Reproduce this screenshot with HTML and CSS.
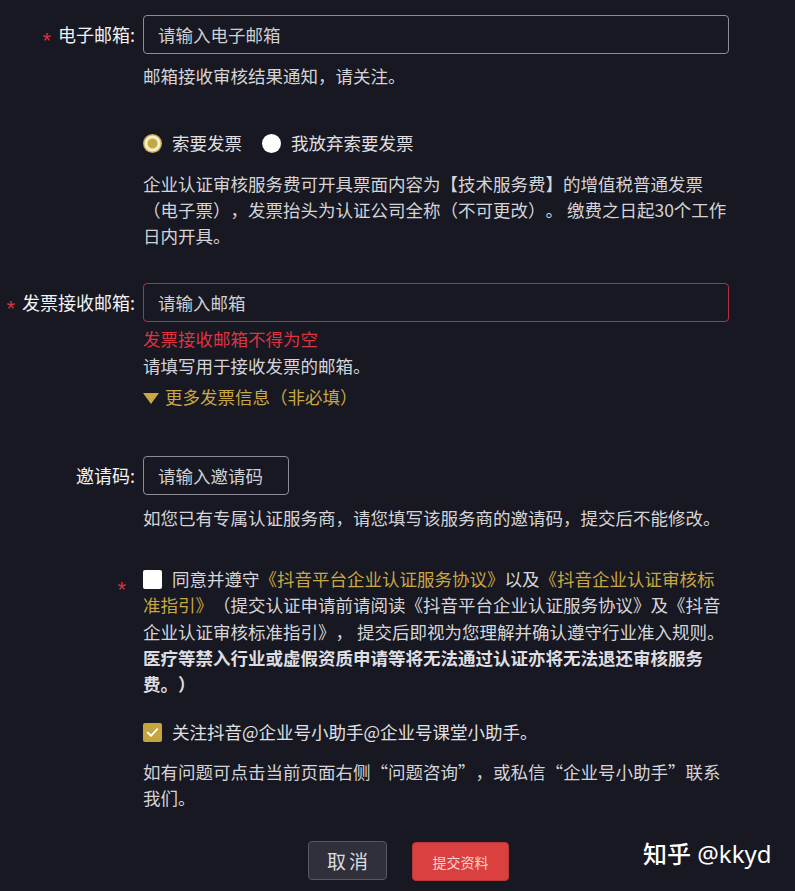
FILE: index.html
```html
<!DOCTYPE html>
<html lang="zh-CN">
<head>
<meta charset="utf-8">
<link rel="stylesheet" href="styles.css">
</head>
<body>
<div class="page">
  <form class="form">
    <div class="row row-email">
      <div class="label"><span class="star">*</span>电子邮箱:</div>
      <div class="field">
        <div class="input input-wide"><span class="ph">请输入电子邮箱</span></div>
        <div class="help help-email">邮箱接收审核结果通知，请关注。</div>
      </div>
    </div>

    <div class="row row-invoice">
      <div class="label"></div>
      <div class="field">
        <div class="radios">
          <label class="radio"><span class="dot dot-on"></span>索要发票</label>
          <label class="radio"><span class="dot"></span>我放弃索要发票</label>
        </div>
        <div class="help help-invoice">企业认证审核服务费可开具票面内容为【技术服务费】的增值税普通发票<br>（电子票），发票抬头为认证公司全称（不可更改）。 缴费之日起30个工作<br>日内开具。</div>
      </div>
    </div>

    <div class="row row-invmail">
      <div class="label"><span class="star">*</span>发票接收邮箱:</div>
      <div class="field">
        <div class="input input-wide input-error"><span class="ph">请输入邮箱</span></div>
        <div class="error">发票接收邮箱不得为空</div>
        <div class="help help-tight">请填写用于接收发票的邮箱。</div>
        <div class="more"><span class="tri"></span>更多发票信息（非必填）</div>
      </div>
    </div>

    <div class="row row-code">
      <div class="label">邀请码:</div>
      <div class="field">
        <div class="input input-short"><span class="ph">请输入邀请码</span></div>
        <div class="help help-code">如您已有专属认证服务商，请您填写该服务商的邀请码，提交后不能修改。</div>
      </div>
    </div>

    <div class="row row-agree">
      <div class="label"><span class="star star-agree">*</span></div>
      <div class="field">
        <p class="agree"><span class="box"></span>同意并遵守<a class="link">《抖音平台企业认证服务协议》</a>以及<a class="link">《抖音企业认证审核标<br>准指引》</a>（提交认证申请前请阅读《抖音平台企业认证服务协议》及《抖音<br>企业认证审核标准指引》， 提交后即视为您理解并确认遵守行业准入规则。<br><b>医疗等禁入行业或虚假资质申请等将无法通过认证亦将无法退还审核服务<br>费。）</b></p>
        <p class="follow"><span class="box box-on"><svg viewBox="0 0 20 20" width="19" height="19"><path d="M5 10.2l3.4 3.3 6.6-7" fill="none" stroke="#fff" stroke-width="2" stroke-linecap="round" stroke-linejoin="round"/></svg></span>关注抖音@企业号小助手@企业号课堂小助手。</p>
        <div class="help help-contact">如有问题可点击当前页面右侧“问题咨询”，或私信“企业号小助手”联系<br>我们。</div>
        <div class="actions">
          <button type="button" class="btn btn-cancel">取消</button>
          <button type="button" class="btn btn-submit">提交资料</button>
        </div>
      </div>
    </div>
  </form>
  <div class="watermark"><span class="wm-zh">知乎</span> @kkyd</div>
</div>
</body>
</html>
```

FILE: styles.css
```css
* { box-sizing: border-box; }
html, body {
  margin: 0;
  padding: 0;
  background: #171821;
}
body {
  font-family: "Noto Sans CJK SC", "Microsoft YaHei", "Noto Sans", sans-serif;
  color: #d6d6da;
  font-size: 17.5px;
  text-spacing-trim: space-all;
}
.page {
  position: relative;
  width: 795px;
  height: 891px;
  overflow: hidden;
}
.form {
  padding-top: 15px;
  display: flex;
  flex-direction: column;
}
.row {
  display: grid;
  grid-template-columns: 135px 640px;
  column-gap: 8px;
}
.label {
  text-align: right;
  color: #f2f2f4;
  font-size: 18px;
  line-height: 39px;
  height: 39px;
  white-space: nowrap;
}
.star {
  display: inline-block;
  color: #d3343f;
  font-family: "Liberation Sans", sans-serif;
  font-size: 22px;
  line-height: 20px;
  margin-right: 7px;
  position: relative;
  top: 6px;
}
.field {
  display: flex;
  flex-direction: column;
  align-items: flex-start;
}
.input {
  height: 39px;
  border: 1px solid #8d8d97;
  border-radius: 4px;
  padding-left: 14px;
  line-height: 37px;
  color: #cfcfd4;
  font-size: 17.5px;
}
.input-wide { width: 586px; }
.input-short { width: 146px; }
.input-error { border-color: #b8303f; height: 39px; }
.help {
  line-height: 26px;
  color: #d4d4d8;
  white-space: nowrap;
}
.help-email { margin-top: 9px; }
.row-invoice { margin-top: 41px; }
.radios {
  display: flex;
  gap: 20px;
  line-height: 26px;
}
.radio {
  display: flex;
  align-items: center;
  gap: 10px;
  color: #e0e0e4;
}
.dot {
  width: 19px;
  height: 19px;
  border-radius: 50%;
  background: #ffffff;
  display: inline-block;
}
.dot-on {
  background: radial-gradient(circle, #c4a93f 0 4.5px, #f3efd6 5.5px 7.5px, #c9ad45 8.5px);
}
.help-invoice { margin-top: 15px; }
.row-invmail { margin-top: 34px; }
.error {
  color: #dd3441;
  line-height: 26px;
  margin-top: 4px;
}
.help-tight { margin-top: 1px; }
.more {
  margin-top: 5px;
  line-height: 26px;
  color: #c8a744;
  display: flex;
  align-items: center;
  gap: 6px;
}
.tri {
  width: 0;
  height: 0;
  border-left: 8px solid transparent;
  border-right: 8px solid transparent;
  border-top: 11px solid #c8a744;
  margin-top: 2px;
}
.row-code { margin-top: 46px; }
.help-code { margin-top: 10px; }
.row-agree { margin-top: 35px; }
.row-agree .label { line-height: 26px; height: 26px; }
.star-agree { top: 10px; margin-right: 9px; }
.agree {
  margin: 0;
  line-height: 26.25px;
  color: #d6d6da;
  white-space: nowrap;
}
.box {
  display: inline-block;
  width: 19px;
  height: 19px;
  border-radius: 2px;
  background: #ffffff;
  vertical-align: -3px;
  margin-right: 10px;
}
.box-on {
  background: #c4a53e;
}
.box-on svg { display: block; }
.link { color: #c8a744; }
.agree b { color: #dedee2; font-weight: 700; }
.follow {
  margin: 22px 0 0;
  line-height: 26px;
  color: #e0e0e4;
}
.help-contact { margin-top: 14px; }
.actions {
  display: flex;
  gap: 25px;
  margin-top: 30px;
  margin-left: 165px;
  align-items: flex-start;
}
.btn {
  font-family: inherit;
  border-radius: 4px;
  cursor: pointer;
}
.btn-cancel {
  width: 79px;
  height: 39px;
  background: #2f3039;
  border: 1px solid #565760;
  color: #dcdce0;
  font-size: 19px;
  letter-spacing: 3px;
  padding: 0 0 0 3px;
}
.btn-submit {
  width: 97px;
  height: 39px;
  margin-top: 1px;
  background: #da403f;
  border: 1px solid #b8383a;
  color: #f6d6d0;
  font-size: 14px;
  padding: 0;
}
.watermark {
  position: absolute;
  left: 643px;
  top: 838px;
  color: #ffffff;
  font-size: 24px;
  line-height: 30px;
  font-family: "Noto Sans", "Noto Sans CJK SC", sans-serif;
}
.wm-zh {
  font-family: "Noto Sans CJK SC", sans-serif;
  font-weight: 500;
}
```
